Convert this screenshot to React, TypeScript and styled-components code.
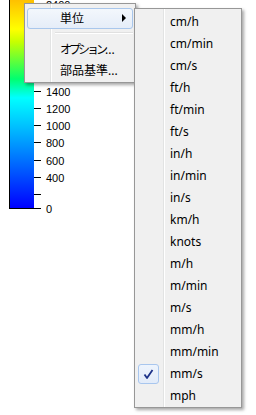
import React from 'react';
import styled, { createGlobalStyle } from 'styled-components';

const GlobalStyle = createGlobalStyle`
  html, body {
    margin: 0;
    padding: 0;
    background: #ffffff;
  }
`;

const Screen = styled.div`
  position: relative;
  width: 256px;
  height: 415px;
  background: #ffffff;
  overflow: hidden;
`;

const Legend = styled.svg`
  display: block;
`;

const TickLabel = styled.text`
  font-family: "Liberation Sans", Arial, sans-serif;
  font-size: 11px;
  fill: #000000;
`;

// popup menus float over the legend, so they are the only absolute things here
const Menu = styled.div<{ $left: number; $top: number; $width: number; $gutter: number; $pad: string }>`
  position: absolute;
  left: ${p => p.$left}px;
  top: ${p => p.$top}px;
  width: ${p => p.$width}px;
  box-sizing: border-box;
  padding: ${p => p.$pad};
  border: 1px solid #979797;
  background:
    linear-gradient(
      to right,
      transparent ${p => p.$gutter}px,
      #e2e3e3 ${p => p.$gutter}px,
      #e2e3e3 ${p => p.$gutter + 1}px,
      #ffffff ${p => p.$gutter + 1}px,
      #ffffff ${p => p.$gutter + 2}px,
      transparent ${p => p.$gutter + 2}px
    ),
    #f0f0f0;
  box-shadow: 2px 2px 3px rgba(0, 0, 0, 0.35);
  font-family: "Noto Sans", "Noto Sans CJK JP", sans-serif;
  font-size: 12px;
  color: #000000;
`;

const Item = styled.div<{ $height: number; $hot?: boolean }>`
  display: flex;
  align-items: center;
  height: ${p => p.$height}px;
  box-sizing: border-box;
  border: 1px solid ${p => (p.$hot ? '#a9c7ec' : 'transparent')};
  border-radius: 3px;
  background: ${p => (p.$hot ? 'linear-gradient(#f3f7fc, #e5edf8)' : 'transparent')};
`;

const IconSlot = styled.div`
  width: 22px;
  height: 100%;
  margin-left: -1px;
  display: flex;
  align-items: center;
  justify-content: center;
`;

const CheckBox = styled.div`
  width: 21px;
  height: 20px;
  box-sizing: border-box;
  border: 1px solid #a8c6ee;
  border-radius: 3px;
  background: linear-gradient(#eef4fd, #e2ebf9);
  display: flex;
  align-items: center;
  justify-content: center;
`;

const Label = styled.span`
  flex: 1;
  margin-left: 11px;
  white-space: nowrap;
  line-height: 1;
`;

// Meiryo UI draws katakana narrower than the CJK fallback
const Kana = styled.span`
  letter-spacing: -3px;
`;

const Arrow = styled.span`
  width: 0;
  height: 0;
  margin-right: 6px;
  margin-top: -2px;
  border-left: 4px solid #000000;
  border-top: 4px solid transparent;
  border-bottom: 4px solid transparent;
`;

const Separator = styled.div`
  height: 10px;
  margin-left: 28px;
  display: flex;
  flex-direction: column;
  justify-content: center;

  &::before {
    content: '';
    height: 1px;
    margin-top: -2px;
    background: #e0e0e0;
    border-bottom: 1px solid #ffffff;
  }
`;

const ticks: { y: number; label?: string }[] = [
  { y: 4, label: '2400' },
  { y: 91, label: '1400' },
  { y: 108, label: '1200' },
  { y: 125.5, label: '1000' },
  { y: 142.5, label: '800' },
  { y: 160, label: '600' },
  { y: 177, label: '400' },
  { y: 194 },
  { y: 208, label: '0' },
];

const units = [
  'cm/h', 'cm/min', 'cm/s', 'ft/h', 'ft/min', 'ft/s', 'in/h', 'in/min', 'in/s',
  'km/h', 'knots', 'm/h', 'm/min', 'm/s', 'mm/h', 'mm/min', 'mm/s', 'mph',
];

const ColorLegend = () => (
  <Legend width={100} height={215}>
    <defs>
      <linearGradient id="ramp" x1="0" y1="0" x2="0" y2="1">
        <stop offset="0" stopColor="#ffc000" />
        <stop offset="0.14" stopColor="#ffff00" />
        <stop offset="0.2" stopColor="#c8ff00" />
        <stop offset="0.38" stopColor="#00ff70" />
        <stop offset="0.47" stopColor="#00ffff" />
        <stop offset="0.6" stopColor="#00c4ff" />
        <stop offset="0.74" stopColor="#0080ff" />
        <stop offset="0.87" stopColor="#0040ff" />
        <stop offset="1" stopColor="#0000ff" />
      </linearGradient>
    </defs>
    <rect x={10} y={0} width={24} height={208} fill="url(#ramp)" />
    <rect x={9} y={0} width={1} height={209} fill="#000" />
    <rect x={9} y={208} width={32} height={1} fill="#000" />
    {ticks.map(t => (
      <g key={t.y}>
        <rect x={34} y={Math.floor(t.y)} width={7} height={1} fill="#000" />
        {t.label && (
          <TickLabel x={46} y={Math.floor(t.y) + 5}>
            {t.label}
          </TickLabel>
        )}
      </g>
    ))}
  </Legend>
);

const CheckMark = () => (
  <svg width="11" height="11" viewBox="0 0 11 11">
    <path d="M1.5 5.5 L4 9 L9.5 1" fill="none" stroke="#1d3289" strokeWidth="1.8" strokeLinejoin="round" />
  </svg>
);

export default function App() {
  return (
    <Screen>
      <GlobalStyle />
      <ColorLegend />

      <Menu $left={24} $top={3} $width={112} $gutter={25} $pad="4px 2px 1px">
        <Item $height={21} $hot>
          <IconSlot />
          <Label>単位</Label>
          <Arrow />
        </Item>
        <Separator />
        <Item $height={21}>
          <IconSlot />
          <Label>
            <Kana>オプション</Kana>...
          </Label>
        </Item>
        <Item $height={21}>
          <IconSlot />
          <Label>部品基準...</Label>
        </Item>
      </Menu>

      <Menu $left={134} $top={8} $width={108} $gutter={28} $pad="2px 2px 0">
        {units.map(u => (
          <Item key={u} $height={22}>
            <IconSlot>
              {u === 'mm/s' && (
                <CheckBox>
                  <CheckMark />
                </CheckBox>
              )}
            </IconSlot>
            <Label>{u}</Label>
          </Item>
        ))}
      </Menu>
    </Screen>
  );
}
